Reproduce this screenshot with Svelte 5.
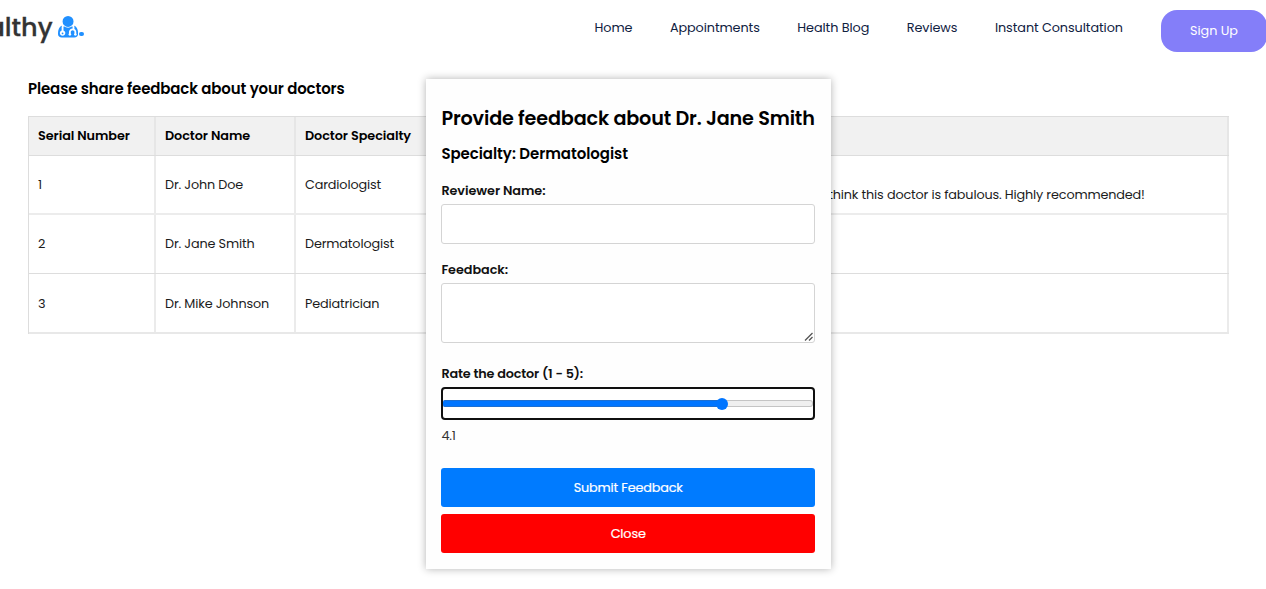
<script>
  const nav = ['Home', 'Appointments', 'Health Blog', 'Reviews', 'Instant Consultation'];
  const heads = ['Serial Number', 'Doctor Name', 'Doctor Specialty', '', ''];
  const rows = [
    { id: '1', name: 'Dr. John Doe', field: 'Cardiologist', review: 'I think this doctor is fabulous. Highly recommended!' },
    { id: '2', name: 'Dr. Jane Smith', field: 'Dermatologist', review: '' },
    { id: '3', name: 'Dr. Mike Johnson', field: 'Pediatrician', review: '' },
  ];
  let rating = $state(4.1);
</script>

<div class="page">
  <header>
    <div class="logo">
      <div class="brand"><span>StayHealthy</span></div>
      <svg class="doctor" viewBox="0 128 1408 1512"><path d="M384 1344q0 26-19 45t-45 19-45-19-19-45 19-45 45-19 45 19 19 45zm1024 37q0 121-73 190t-194 69h-874q-121 0-194-69t-73-190q0-68 5.500-131t24-138 47.500-132.500 81-103 120-60.500q-22 52-22 120v203q-58 20-93 70t-35 111q0 80 56 136t136 56 136-56 56-136q0-61-35.500-111t-92.500-70v-203q0-62 25-93 132 104 295 104t295-104q25 31 25 93v64q-106 0-181 75t-75 181v89q-32 29-32 71 0 40 28 68t68 28 68-28 28-68q0-42-32-71v-89q0-52 38-90t90-38 90 38 38 90v89q-32 29-32 71 0 40 28 68t68 28 68-28 28-68q0-42-32-71v-89q0-68-34.500-127.500t-93.500-93.500q0-10 .5-42.500t0-48-2.500-41.500-7-47-13-40q68 15 120 60.500t81 103 47.500 132.500 24 138 5.500 131zm-320-869q0 159-112.500 271.500t-271.500 112.500-271.500-112.500-112.500-271.500 112.500-271.500 271.500-112.500 271.500 112.500 112.500 271.500z" /></svg>
      <i class="dot"></i>
    </div>
    <nav>
      {#each nav as label}
        <a href="#top">{label}</a>
      {/each}
    </nav>
    <button class="signup">Sign Up</button>
  </header>

  <main>
    <h3 class="title">Please share feedback about your doctors</h3>
    <div class="table">
      <div class="row head">
        {#each heads as label}
          <div class="cell">{label}</div>
        {/each}
      </div>
      {#each rows as row}
        <div class="row">
          <div class="cell">{row.id}</div>
          <div class="cell">{row.name}</div>
          <div class="cell">{row.field}</div>
          <div class="cell"></div>
          <div class="cell review">{row.review}</div>
        </div>
      {/each}
    </div>
  </main>

  <div class="modal">
    <h2>Provide feedback about Dr. Jane Smith</h2>
    <h3 class="specialty">Specialty: Dermatologist</h3>
    <label for="reviewer">Reviewer Name:</label>
    <input id="reviewer" type="text" />
    <label for="feedback">Feedback:</label>
    <div class="area">
      <textarea id="feedback"></textarea>
      <svg class="grip" viewBox="0 0 10 10"><path d="M1 8.500L8.500 1M5 8.500L8.500 5" /></svg>
    </div>
    <label class="rate" for="rating">Rate the doctor (1 - 5):</label>
    <div class="range" id="rating">
      <div class="track"><div class="fill" style="width: {((rating - 1.08) / 4) * 100}%"><i class="thumb"></i></div></div>
    </div>
    <div class="value">{rating}</div>
    <button class="submit">Submit Feedback</button>
    <button class="close">Close</button>
  </div>
</div>

<style>
  :global(body) {
    margin: 0;
    background: #fff;
    overflow: hidden;
  }
  .page {
    position: relative;
    width: 1266px;
    height: 589px;
    overflow: hidden;
    font: 12.8px/19px Poppins, Inter, sans-serif;
    letter-spacing: -0.15px;
    color: #1c1c1c;
    white-space: nowrap;
  }
  .page * { box-sizing: border-box; }
  header {
    display: flex;
    height: 62px;
  }
  .logo {
    display: flex;
    flex: none;
    width: 594.5px;
  }
  .brand {
    display: flex;
    justify-content: flex-end;
    width: 52.6px;
    height: 55px;
    overflow: hidden;
    font-size: 25.6px;
    line-height: 54px;
    letter-spacing: 0;
    font-weight: 500;
    -webkit-text-stroke: 0.3px #333;
    color: #333;
  }
  .doctor {
    flex: none;
    width: 20.1px;
    height: 21.6px;
    margin: 16.3px 0 0 5.7px;
    fill: #2190ff;
  }
  .dot {
    flex: none;
    width: 4.6px;
    height: 4.6px;
    margin: 31.8px 0 0 0.7px;
    border-radius: 50%;
    background: #2190ff;
  }
  nav {
    display: flex;
    gap: 37.5px;
    width: 566.5px;
    flex: none;
    padding-top: 17.5px;
    letter-spacing: -0.07px;
  }
  nav a {
    color: #10213f;
    text-decoration: none;
  }
  .signup {
    flex: none;
    width: 106px;
    height: 42px;
    margin-top: 10px;
    padding: 0;
    border: 0;
    border-radius: 16px;
    background: #847ef9;
    color: #fff;
    font: 12.8px/42px Poppins, Inter, sans-serif;
    letter-spacing: -0.05px;
  }
  main { padding: 16px 37px 0 28px; }
  h2, h3 { margin: 0; color: #000; }
  .title {
    height: 38px;
    font-size: 14.98px;
    line-height: 22px;
    font-weight: 600;
    letter-spacing: -0.125px;
  }
  .table {
    border-top: 1px solid #ddd;
    border-left: 1px solid #ddd;
    width: 1201px;
  }
  .row {
    display: grid;
    grid-template-columns: 127px 140px 160px 357px 416px;
    height: 59px;
    border-bottom: 2px solid #ececec;
  }
  .row:nth-child(3) { border-bottom: 1px solid #ddd; }
  .row:nth-child(4) { height: 60px; border-bottom-color: #e8e8e8; }
  .head {
    height: 39px;
    border-bottom: 1px solid #ddd;
    background: #f1f1f1;
    color: #000;
    font-weight: 600;
    letter-spacing: -0.06px;
  }
  .cell {
    display: flex;
    align-items: center;
    padding-left: 9px;
    padding-bottom: 1px;
    border-right: 2px solid #ebebeb;
  }
  .row:nth-child(4) .cell { padding-bottom: 0; }
  .head .cell { border-right-color: #e6e6e6; }
  .review { padding-top: 20px; }
  .modal {
    position: absolute;
    left: 426px;
    top: 79px;
    width: 405px;
    height: 490px;
    padding: 26px 16px 16px 15.4px;
    display: flex;
    flex-direction: column;
    background: #fefefe;
    box-shadow: 0 0 8px rgba(0, 0, 0, 0.3);
  }
  h2 {
    font-size: 19.2px;
    line-height: 28px;
    font-weight: 600;
  }
  .specialty {
    margin-top: 10px;
    font-size: 14.98px;
    line-height: 22px;
    font-weight: 600;
    letter-spacing: -0.04px;
  }
  label {
    margin-top: 16px;
    height: 23px;
    font-weight: 600;
    letter-spacing: -0.06px;
    color: #111;
  }
  input, textarea {
    display: block;
    width: 100%;
    height: 40px;
    margin: 0;
    border: 1px solid #d4d4d4;
    border-radius: 3px;
    background: #fff;
    outline: none;
    resize: none;
  }
  textarea { height: 60px; }
  .area { position: relative; }
  .grip {
    position: absolute;
    right: 1px;
    bottom: 1px;
    width: 10px;
    height: 10px;
    fill: none;
    stroke: #555;
    stroke-width: 1.3;
  }
  .rate { margin-top: 21px; letter-spacing: -0.15px; }
  .range {
    height: 33px;
    border: 2px solid #101010;
    border-radius: 4px;
    padding: 11px 0;
    background: #fff;
  }
  .track {
    height: 7px;
    border: 1px solid #c4c4c4;
    border-left: 0;
    border-radius: 3px;
    background: #efefef;
  }
  .fill {
    position: relative;
    height: 7px;
    margin-top: -1px;
    border: 1px solid #1d6fd1;
    border-width: 1px 0;
    border-radius: 2px 0 0 2px;
    background: #0075ff;
  }
  .thumb {
    position: absolute;
    right: -6px;
    top: -3.5px;
    width: 12px;
    height: 12px;
    border-radius: 50%;
    background: #0075ff;
  }
  .value {
    margin-top: 6px;
    height: 42.3px;
    color: #333;
  }
  .submit, .close {
    height: 38.4px;
    flex: none;
    padding: 1px 0 0;
    border: 0;
    border-radius: 3px;
    background: #007bff;
    color: #fff;
    font: 12.8px/38px Poppins, Inter, sans-serif;
    letter-spacing: -0.15px;
    -webkit-text-stroke: 0.2px #fff;
  }
  .close { margin-top: 7.6px; background: #f00; }
</style>
